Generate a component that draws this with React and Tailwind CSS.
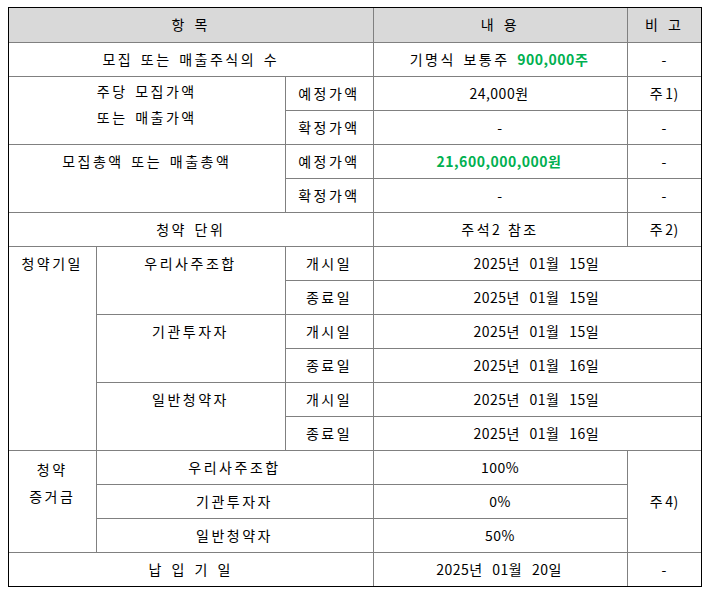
const cell = 'border border-[#808080] text-center align-top pt-[3px] leading-[26px]';

// ASCII runs (digits, commas, %) keep a tight tracking, hangul gets the wide one
function T({ text }) {
  return text.split(/([0-9,.%()\-]+)/).map((part, i) =>
    /^[0-9,.%()\-]+$/.test(part) ? (
      <span key={i} className="tracking-[0.5px]">{part}</span>
    ) : (
      part
    )
  );
}

function Green({ text }) {
  return (
    <span className="font-bold text-[#00b050]">
      <T text={text} />
    </span>
  );
}

export default function App() {
  const periods = [
    ['우리사주조합', '2025년 01월 15일', '2025년 01월 15일'],
    ['기관투자자', '2025년 01월 15일', '2025년 01월 16일'],
    ['일반청약자', '2025년 01월 15일', '2025년 01월 16일'],
  ];
  const deposits = [
    ['우리사주조합', '100%'],
    ['기관투자자', '0%'],
    ['일반청약자', '50%'],
  ];

  return (
    <div
      className="min-h-screen bg-white pt-[7px] pl-[8px] text-[14px] text-black tracking-[2.5px] [word-spacing:2px]"
      style={{ fontFamily: '"Noto Sans CJK KR", "Noto Sans", sans-serif' }}
    >
      <div className="w-[694px] border border-black">
        <table className="w-[692px] table-fixed border-collapse border-hidden">
          <colgroup>
            <col className="w-[87px]" />
            <col className="w-[189px]" />
            <col className="w-[88px]" />
            <col className="w-[254px]" />
            <col className="w-[74px]" />
          </colgroup>
          <tbody>
            <tr className="h-[34px] bg-[#d9d9d9]">
              <td colSpan={3} className={cell}>항 목</td>
              <td className={cell}>내 용</td>
              <td className={cell}>비 고</td>
            </tr>
            <tr className="h-[34px]">
              <td colSpan={3} className={cell}>모집 또는 매출주식의 수</td>
              <td className={cell}>
                기명식 보통주 <Green text="900,000주" />
              </td>
              <td className={cell}><T text="-" /></td>
            </tr>
            <tr className="h-[34px]">
              <td
                colSpan={2}
                rowSpan={2}
                className="border border-[#808080] text-center align-top pt-[1px] leading-[26px]"
              >
                주당 모집가액
                <br />
                또는 매출가액
              </td>
              <td className={cell}>예정가액</td>
              <td className={cell}><T text="24,000원" /></td>
              <td className={cell}><T text="주1)" /></td>
            </tr>
            <tr className="h-[34px]">
              <td className={cell}>확정가액</td>
              <td className={cell}><T text="-" /></td>
              <td className={cell}><T text="-" /></td>
            </tr>
            <tr className="h-[34px]">
              <td colSpan={2} rowSpan={2} className={cell}>모집총액 또는 매출총액</td>
              <td className={cell}>예정가액</td>
              <td className={cell}>
                <Green text="21,600,000,000원" />
              </td>
              <td className={cell}><T text="-" /></td>
            </tr>
            <tr className="h-[34px]">
              <td className={cell}>확정가액</td>
              <td className={cell}><T text="-" /></td>
              <td className={cell}><T text="-" /></td>
            </tr>
            <tr className="h-[34px]">
              <td colSpan={3} className={cell}>청약 단위</td>
              <td className={cell}><T text="주석2 참조" /></td>
              <td className={cell}><T text="주2)" /></td>
            </tr>
            {periods.map(([who, start, end], i) => [
              <tr key={who + 'a'} className="h-[34px]">
                {i === 0 && (
                  <td rowSpan={6} className={cell}>청약기일</td>
                )}
                <td rowSpan={2} className={cell}>{who}</td>
                <td className={cell}>개시일</td>
                <td colSpan={2} className={cell}><T text={start} /></td>
              </tr>,
              <tr key={who + 'b'} className="h-[34px]">
                <td className={cell}>종료일</td>
                <td colSpan={2} className={cell}><T text={end} /></td>
              </tr>,
            ])}
            {deposits.map(([who, rate], i) => (
              <tr key={who + 'd'} className="h-[34px]">
                {i === 0 && (
                  <td
                    rowSpan={3}
                    className="border border-[#808080] text-center align-top pt-[5px] leading-[27px]"
                  >
                    청약
                    <br />
                    증거금
                  </td>
                )}
                <td colSpan={2} className={cell}>{who}</td>
                <td className={cell}><T text={rate} /></td>
                {i === 0 && (
                  <td rowSpan={3} className="border border-[#808080] text-center align-middle">
                    <T text="주4)" />
                  </td>
                )}
              </tr>
            ))}
            <tr className="h-[34px]">
              <td colSpan={3} className={cell}>납 입 기 일</td>
              <td className={cell}><T text="2025년 01월 20일" /></td>
              <td className={cell}><T text="-" /></td>
            </tr>
          </tbody>
        </table>
      </div>
    </div>
  );
}
